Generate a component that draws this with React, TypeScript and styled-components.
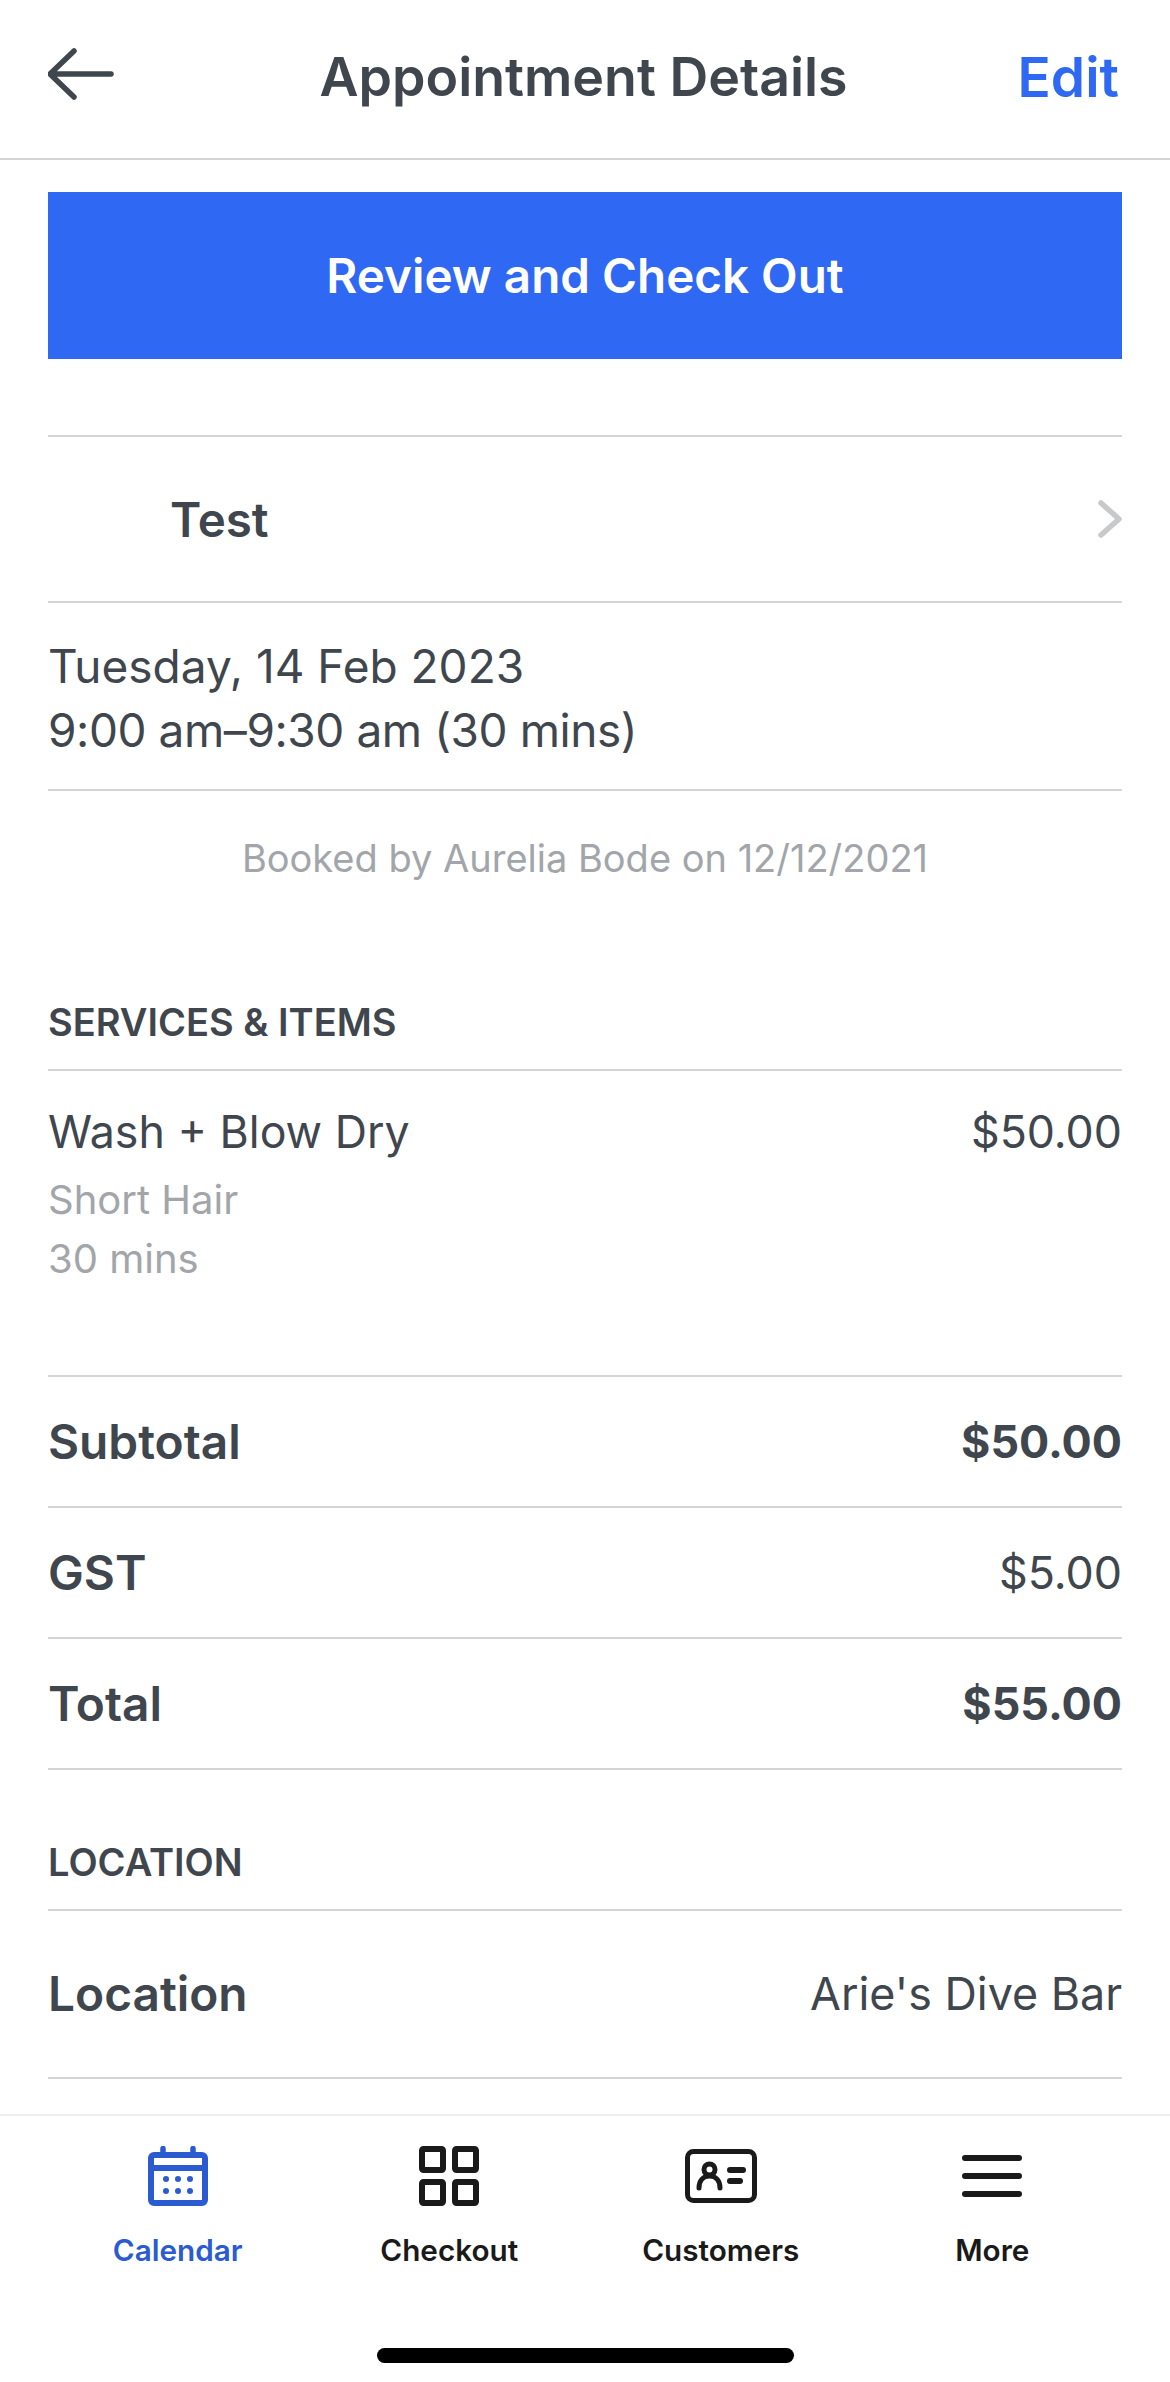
import styled, { createGlobalStyle } from 'styled-components';

const GlobalStyle = createGlobalStyle`
  html, body {
    margin: 0;
    padding: 0;
    background: #fff;
  }
  * {
    box-sizing: border-box;
  }
`;

const Screen = styled.div`
  width: 1170px;
  height: 2382px;
  display: flex;
  flex-direction: column;
  overflow: hidden;
  background: #fff;
  color: #40464d;
  font-family: Inter, 'Liberation Sans', sans-serif;
`;

const Header = styled.header`
  height: 160px;
  flex-shrink: 0;
  display: grid;
  grid-template-columns: 1fr auto 1fr;
  align-items: start;
  padding: 48px 51px 0 48px;
  border-bottom: 2px solid #d4d5d6;
`;

const BackIcon = styled.svg`
  width: 66px;
  height: 52px;
  display: block;
`;

const Title = styled.h1`
  margin: 0;
  font-size: 53.7px;
  line-height: 58px;
  font-weight: 600;
`;

const EditLink = styled.span`
  justify-self: end;
  font-size: 55px;
  line-height: 58px;
  font-weight: 600;
  color: #2f68f3;
`;

const Content = styled.main`
  flex: 1;
  min-height: 0;
  padding: 32px 48px 0;
`;

const PrimaryButton = styled.button`
  width: 100%;
  height: 167px;
  display: block;
  margin-bottom: 76px;
  border: 0;
  padding: 0;
  background: #2f68f3;
  color: #fff;
  font: 600 47.6px Inter, 'Liberation Sans', sans-serif;
`;

const Row = styled.div<{ $height: number; $first?: boolean }>`
  height: ${(p) => p.$height}px;
  display: flex;
  align-items: center;
  justify-content: space-between;
  border-bottom: 2px solid #d4d5d6;
  ${(p) => p.$first && 'border-top: 2px solid #d4d5d6;'}
`;

const CustomerName = styled.span`
  font-size: 47.5px;
  font-weight: 600;
  padding-left: 122px;
`;

const Chevron = styled.svg`
  width: 24px;
  height: 38px;
  display: block;
`;

const DateBlock = styled.div`
  font-size: 46px;
  line-height: 64px;
  padding-top: 3px;
`;

const TimeLine = styled.div`
  letter-spacing: -0.43px;
`;

const BookedNote = styled.p`
  margin: 0;
  height: 134px;
  display: flex;
  align-items: center;
  justify-content: center;
  font-size: 38px;
  color: #a2a5a9;
`;

const SectionTitle = styled.h2<{ $height: number }>`
  margin: 0;
  height: ${(p) => p.$height}px;
  display: flex;
  align-items: flex-end;
  padding-bottom: 25px;
  font-size: 38px;
  line-height: 44px;
  font-weight: 600;
  border-bottom: 2px solid #d4d5d6;
`;

const ServiceItem = styled.div`
  height: 306px;
  display: flex;
  justify-content: space-between;
  padding-top: 32px;
  border-bottom: 2px solid #d4d5d6;
`;

const ServiceName = styled.div`
  font-size: 44.7px;
  line-height: 58px;
`;

const ServiceMeta = styled.div`
  font-size: 40px;
  line-height: 59px;
  color: #a2a5a9;
`;

const ServiceInfo = styled.div`
  display: flex;
  flex-direction: column;
  gap: 9px;
`;

const Label = styled.span`
  font-size: 47.8px;
  font-weight: 600;
`;

const Value = styled.span<{ $bold?: boolean }>`
  font-size: 44.8px;
  font-weight: ${(p) => (p.$bold ? 700 : 400)};
`;

const TabBar = styled.nav`
  flex-shrink: 0;
  height: 268px;
  border-top: 2px solid #efefef;
  display: flex;
  flex-direction: column;
  align-items: center;
  padding-top: 30px;
`;

const TabList = styled.div`
  width: 100%;
  display: grid;
  grid-template-columns: repeat(4, 1fr);
  padding: 0 42px;
`;

const Tab = styled.div<{ $active?: boolean }>`
  display: flex;
  flex-direction: column;
  align-items: center;
  color: ${(p) => (p.$active ? '#2a5bd0' : '#1a1a1a')};
  font-size: 29.7px;
  line-height: 36px;
  font-weight: 600;
`;

const TabIcon = styled.svg`
  width: 72px;
  height: 60px;
  display: block;
  margin-bottom: 26px;
`;

const HomeIndicator = styled.div`
  width: 417px;
  height: 15px;
  margin-top: 80px;
  border-radius: 8px;
  background: #000;
`;

const CalendarGlyph = () => (
  <TabIcon viewBox="0 0 72 60">
    <path d="M21 6V2.5M51 6V2.5" stroke="currentColor" strokeWidth="5.5" strokeLinecap="round" fill="none" />
    <rect x="9" y="9" width="54" height="48" rx="3" stroke="currentColor" strokeWidth="6" fill="none" />
    <rect x="9" y="19" width="54" height="6" fill="currentColor" />
    <g fill="currentColor">
      <circle cx="24" cy="33" r="3" />
      <circle cx="36" cy="33" r="3" />
      <circle cx="48" cy="33" r="3" />
      <circle cx="24" cy="45" r="3" />
      <circle cx="36" cy="45" r="3" />
      <circle cx="48" cy="45" r="3" />
    </g>
  </TabIcon>
);

const CheckoutGlyph = () => (
  <TabIcon viewBox="0 0 72 60">
    <g stroke="currentColor" strokeWidth="6" fill="none">
      <rect x="9" y="3" width="21" height="21" rx="1.5" />
      <rect x="42" y="3" width="21" height="21" rx="1.5" />
      <rect x="9" y="36" width="21" height="21" rx="1.5" />
      <rect x="42" y="36" width="21" height="21" rx="1.5" />
    </g>
  </TabIcon>
);

const CustomersGlyph = () => (
  <TabIcon viewBox="0 0 72 60">
    <rect x="2.5" y="5.5" width="67" height="49" rx="6" stroke="currentColor" strokeWidth="5" fill="none" />
    <circle cx="24.5" cy="23.5" r="5.5" stroke="currentColor" strokeWidth="5" fill="none" />
    <path d="M14 42c0-7 4-12 10.5-12S35 35 35 42" stroke="currentColor" strokeWidth="5" strokeLinecap="round" fill="none" />
    <path d="M45 24H58M45 35H55" stroke="currentColor" strokeWidth="6" strokeLinecap="round" fill="none" />
  </TabIcon>
);

const MoreGlyph = () => (
  <TabIcon viewBox="0 0 72 60">
    <path d="M9 12H63M9 30H63M9 48H63" stroke="currentColor" strokeWidth="6" strokeLinecap="round" fill="none" />
  </TabIcon>
);

const App = () => (
  <>
    <GlobalStyle />
    <Screen>
      <Header>
        <BackIcon viewBox="0 0 66 52">
          <path
            d="M26 3L2 26L26 49M2 26H63"
            stroke="#40464d"
            strokeWidth="5.5"
            strokeLinecap="round"
            strokeLinejoin="round"
            fill="none"
          />
        </BackIcon>
        <Title>Appointment Details</Title>
        <EditLink>Edit</EditLink>
      </Header>
      <Content>
        <PrimaryButton>Review and Check Out</PrimaryButton>
        <Row $height={168} $first>
          <CustomerName>Test</CustomerName>
          <Chevron viewBox="0 0 24 38">
            <path d="M3 3L21 19L3 35" stroke="#c8c9ca" strokeWidth="5.5" strokeLinecap="round" strokeLinejoin="round" fill="none" />
          </Chevron>
        </Row>
        <Row $height={188}>
          <DateBlock>
            Tuesday, 14 Feb 2023
            <TimeLine>9:00 am–9:30 am (30 mins)</TimeLine>
          </DateBlock>
        </Row>
        <BookedNote>Booked by Aurelia Bode on 12/12/2021</BookedNote>
        <SectionTitle $height={146}>SERVICES &amp; ITEMS</SectionTitle>
        <ServiceItem>
          <ServiceInfo>
            <ServiceName>Wash + Blow Dry</ServiceName>
            <div>
              <ServiceMeta>Short Hair</ServiceMeta>
              <ServiceMeta>30 mins</ServiceMeta>
            </div>
          </ServiceInfo>
          <ServiceName>$50.00</ServiceName>
        </ServiceItem>
        <Row $height={131}>
          <Label>Subtotal</Label>
          <Value $bold>$50.00</Value>
        </Row>
        <Row $height={131}>
          <Label>GST</Label>
          <Value>$5.00</Value>
        </Row>
        <Row $height={131}>
          <Label>Total</Label>
          <Value $bold>$55.00</Value>
        </Row>
        <SectionTitle $height={141}>LOCATION</SectionTitle>
        <Row $height={168}>
          <Label>Location</Label>
          <Value>Arie's Dive Bar</Value>
        </Row>
      </Content>
      <TabBar>
        <TabList>
          <Tab $active>
            <CalendarGlyph />
            Calendar
          </Tab>
          <Tab>
            <CheckoutGlyph />
            Checkout
          </Tab>
          <Tab>
            <CustomersGlyph />
            Customers
          </Tab>
          <Tab>
            <MoreGlyph />
            More
          </Tab>
        </TabList>
        <HomeIndicator />
      </TabBar>
    </Screen>
  </>
);

export default App;
